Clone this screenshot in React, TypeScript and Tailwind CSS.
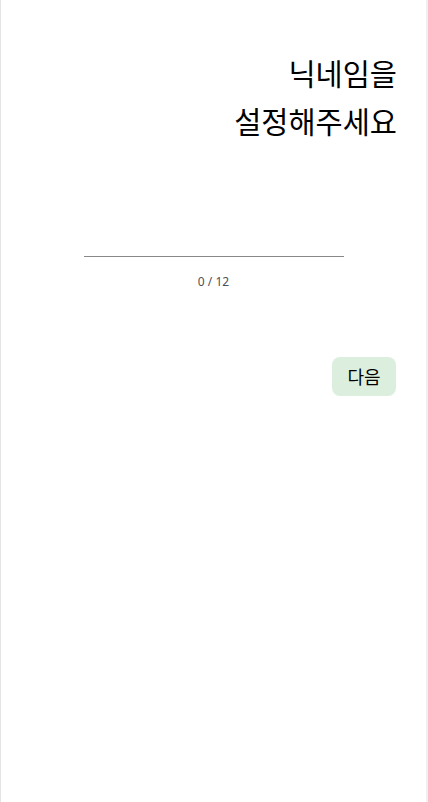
import React, { useState } from 'react';

export default function App() {
  const [nickname, setNickname] = useState('');

  return (
    <div
      className="min-h-[802px] w-full bg-white border-l border-r-2 border-l-[#e5e5e5] border-r-[#f0f0f0]"
      style={{ fontFamily: '"Noto Sans", "Noto Sans CJK KR", sans-serif' }}
    >
      <div className="pl-8 pr-[29px] pt-[50px]">
        <h1 className="text-right text-[29.5px] leading-[48px] font-normal text-black">
          닉네임을
          <br />
          설정해주세요
        </h1>
      </div>

      <div className="mt-[81px] flex flex-col items-center">
        <input
          value={nickname}
          maxLength={12}
          onChange={(e) => setNickname(e.target.value)}
          className="w-[260px] h-[30px] border-b border-b-[#888888] outline-none text-center text-base"
        />
        <p className="mt-[17px] text-xs leading-4 text-[#4a4f5a]">
          {nickname.length} / 12
        </p>
      </div>

      <div className="mt-[67px] flex justify-end pr-[30px]">
        <button className="w-16 h-[39px] rounded-lg bg-[#dcefdf] text-lg text-black">
          다음
        </button>
      </div>
    </div>
  );
}
